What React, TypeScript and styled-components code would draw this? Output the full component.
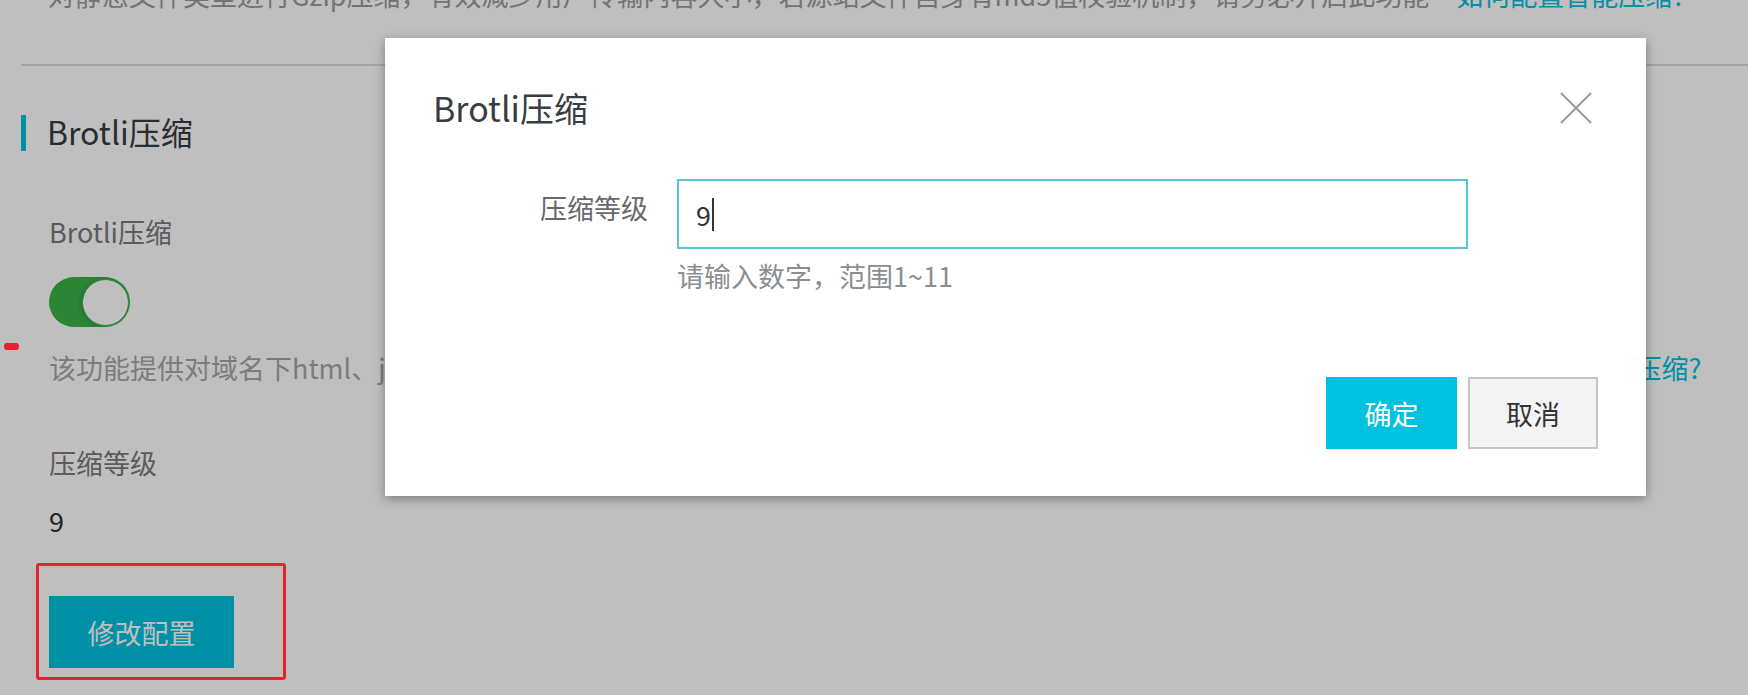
import React from "react";
import styled, { createGlobalStyle } from "styled-components";

const Global = createGlobalStyle`
  html, body { margin: 0; padding: 0; background: #ffffff; }
  body { font-family: "Noto Sans CJK SC", "Noto Sans", sans-serif; overflow: hidden; }
  * { box-sizing: border-box; }
`;

const Page = styled.div`
  position: relative;
  width: 1748px;
  height: 695px;
  overflow: hidden;
  padding-left: 21px;
  background: #ffffff;
`;

const Intro = styled.p`
  margin: -25px 0 0 27px;
  font-size: 27px;
  line-height: 40px;
  color: #9a9a9a;
  white-space: nowrap;
`;

const Link = styled.a<{ $gap?: number }>`
  color: #00c1de;
  text-decoration: none;
  margin-left: ${(p) => p.$gap ?? 0}px;
`;

const Divider = styled.hr`
  margin: 49px 0 0 0;
  border: none;
  height: 2px;
  background: #dcdcdc;
`;

const SectionHeader = styled.div`
  margin-top: 49px;
  display: flex;
  align-items: flex-start;
  height: 36px;
`;

const Bar = styled.span`
  width: 5px;
  height: 36px;
  background: #00c1de;
`;

const SectionTitle = styled.h2`
  margin: -2px 0 0 21px;
  font-size: 32px;
  line-height: 36px;
  font-weight: 400;
  color: #373d41;
`;

const Body = styled.div`
  padding-left: 28px;
  display: flex;
  flex-direction: column;
  align-items: flex-start;
`;

const FieldLabel = styled.div<{ $mt: number }>`
  margin-top: ${(p) => p.$mt}px;
  font-size: 27px;
  line-height: 36px;
  color: #777a7c;
`;

const FieldValue = styled.div`
  margin-top: 22px;
  font-size: 27px;
  line-height: 36px;
  color: #2e2e2e;
`;

const Toggle = styled.div`
  margin-top: 27px;
  width: 81px;
  height: 50px;
  border-radius: 25px;
  background: #3bb147;
  display: flex;
  align-items: center;
  justify-content: flex-end;
  padding-right: 1px;
`;

const Knob = styled.span`
  width: 47px;
  height: 47px;
  border-radius: 50%;
  background: #ffffff;
  border: 1px solid #3bb147;
  box-shadow: -2px 0 4px rgba(0, 0, 0, 0.12);
`;

const Desc = styled.div`
  margin-top: 23px;
  font-size: 27px;
  line-height: 36px;
  color: #a6a6a6;
  white-space: nowrap;
`;

const ActionArea = styled.div`
  position: relative;
  margin-top: 57px;
`;

const PrimaryButton = styled.button<{ $w: number }>`
  width: ${(p) => p.$w}px;
  height: 72px;
  border: none;
  background: #00c1de;
  color: #ffffff;
  font-family: inherit;
  font-size: 27px;
  padding: 0;
  cursor: pointer;
`;

const SecondaryButton = styled.button`
  width: 130px;
  height: 72px;
  border: 2px solid #c6c6c6;
  background: #f4f4f4;
  color: #333333;
  font-family: inherit;
  font-size: 27px;
  padding: 0;
  cursor: pointer;
`;

const Mask = styled.div`
  position: absolute;
  inset: 0;
  background: rgba(0, 0, 0, 0.25);
`;

const AnnotationBox = styled.div`
  position: absolute;
  left: -13px;
  top: -33px;
  width: 250px;
  height: 117px;
  border: 3px solid #e8232f;
  border-radius: 3px;
  z-index: 5;
`;

const AnnotationMark = styled.div`
  position: absolute;
  left: 4px;
  top: 343px;
  width: 15px;
  height: 7px;
  border-radius: 3px;
  background: #e8232f;
  z-index: 5;
`;

const Dialog = styled.div`
  position: absolute;
  left: 385px;
  top: 38px;
  width: 1261px;
  height: 458px;
  background: #ffffff;
  box-shadow: 0 3px 10px rgba(0, 0, 0, 0.35);
  padding: 52px 54px 47px 48px;
  display: flex;
  flex-direction: column;
  z-index: 10;
`;

const DialogHeader = styled.div`
  display: flex;
  justify-content: space-between;
  align-items: center;
  height: 36px;
`;

const DialogTitle = styled.h3`
  margin: 0;
  font-size: 34px;
  line-height: 36px;
  font-weight: 400;
  color: #373d41;
`;

const CloseButton = styled.button`
  width: 32px;
  height: 32px;
  padding: 0;
  border: none;
  background: transparent;
  display: flex;
  cursor: pointer;
`;

const FormRow = styled.div`
  margin-top: 53px;
  display: grid;
  grid-template-columns: 215px 791px;
  column-gap: 29px;
`;

const FormLabel = styled.label`
  padding-top: 11px;
  text-align: right;
  font-size: 27px;
  line-height: 36px;
  color: #666a6d;
`;

const FormControl = styled.div`
  display: flex;
  flex-direction: column;
`;

const InputBox = styled.div`
  height: 70px;
  border: 2px solid #57c6d3;
  display: flex;
  align-items: center;
  padding-left: 17px;
  font-size: 27px;
  color: #333333;
`;

const Caret = styled.span`
  width: 2px;
  height: 33px;
  margin-left: 1px;
  background: #333333;
`;

const Help = styled.div`
  margin-top: 9px;
  font-size: 27px;
  line-height: 36px;
  color: #8a8e91;
`;

const Footer = styled.div`
  margin-top: auto;
  display: flex;
  justify-content: flex-end;
  gap: 11px;
  margin-right: -6px;
`;

export default function App() {
  return (
    <>
      <Global />
      <Page>
        <Intro>
          对静态文件类型进行Gzip压缩，有效减少用户传输内容大小，若源站文件自身有md5值校验机制，请务必开启此功能
          <Link $gap={27} href="#">如何配置智能压缩?</Link>
        </Intro>
        <Divider />
        <SectionHeader>
          <Bar />
          <SectionTitle>Brotli压缩</SectionTitle>
        </SectionHeader>
        <Body>
          <FieldLabel $mt={63}>Brotli压缩</FieldLabel>
          <Toggle>
            <Knob />
          </Toggle>
          <Desc>
            该功能提供对域名下html、js、css等静态文件进行Brotli压缩，相比Gzip有更高的压缩比，需同时开启Gzip压缩功能
            <Link $gap={30} href="#">如何配置Brotli压缩?</Link>
          </Desc>
          <FieldLabel $mt={59}>压缩等级</FieldLabel>
          <FieldValue>9</FieldValue>
          <ActionArea>
            <PrimaryButton $w={185}>修改配置</PrimaryButton>
            <AnnotationBox />
          </ActionArea>
        </Body>
        <Mask />
        <AnnotationMark />
        <Dialog>
          <DialogHeader>
            <DialogTitle>Brotli压缩</DialogTitle>
            <CloseButton aria-label="关闭">
              <svg width="32" height="32" viewBox="0 0 32 32">
                <path d="M1 1 L31 31 M31 1 L1 31" stroke="#9b9b9b" strokeWidth="2" fill="none" />
              </svg>
            </CloseButton>
          </DialogHeader>
          <FormRow>
            <FormLabel>压缩等级</FormLabel>
            <FormControl>
              <InputBox>
                9<Caret />
              </InputBox>
              <Help>请输入数字，范围1~11</Help>
            </FormControl>
          </FormRow>
          <Footer>
            <PrimaryButton $w={131}>确定</PrimaryButton>
            <SecondaryButton>取消</SecondaryButton>
          </Footer>
        </Dialog>
      </Page>
    </>
  );
}
